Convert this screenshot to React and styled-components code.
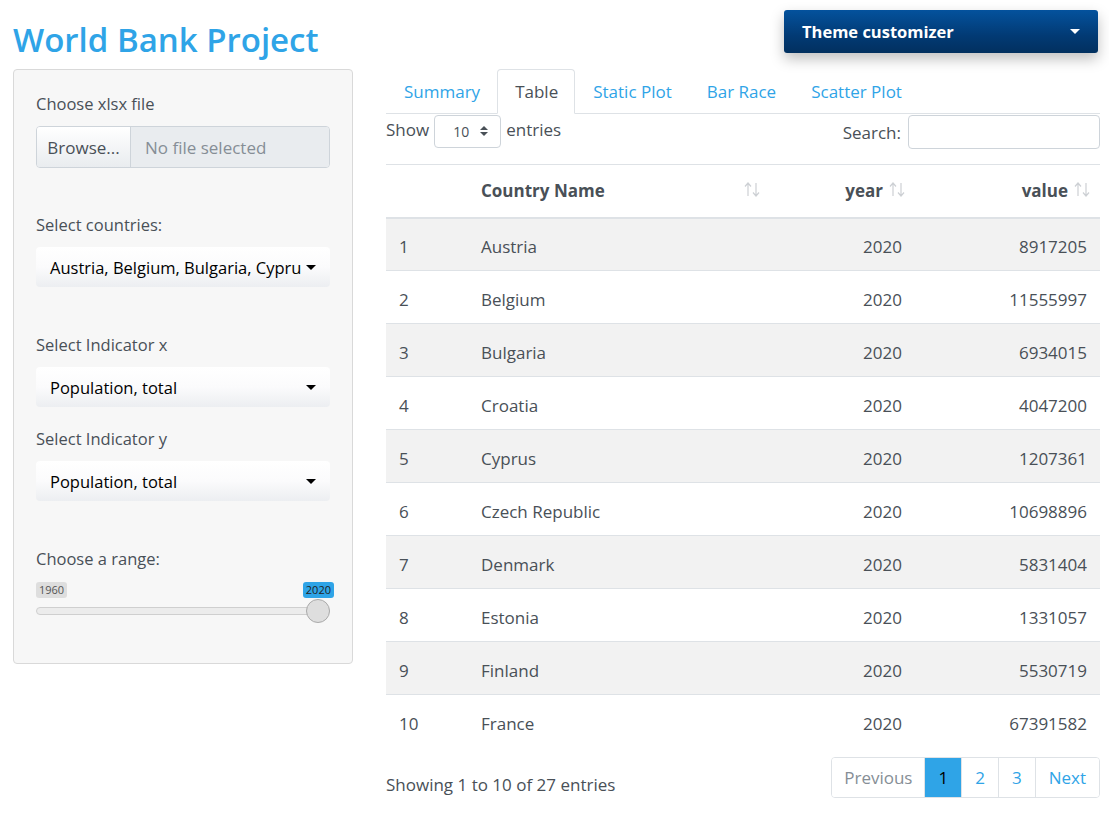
import React from "react";
import styled, { createGlobalStyle } from "styled-components";

const GlobalStyle = createGlobalStyle`
  html, body {
    margin: 0;
    padding: 0;
    background: #ffffff;
  }
  body {
    font-family: "Open Sans", "Noto Sans", sans-serif;
    font-size: 17px;
    color: #495057;
  }
  * {
    box-sizing: border-box;
  }
`;

const Page = styled.div`
  display: grid;
  grid-template-columns: 340px 714px;
  column-gap: 33px;
  padding: 0 9px 0 13px;
  position: relative;
`;

const Title = styled.h2`
  grid-column: 1 / 2;
  margin: 18px 0 8px;
  font-size: 33px;
  font-weight: 600;
  line-height: 43px;
  color: #2fa4e7;
  white-space: nowrap;
`;

const ThemeButton = styled.div`
  position: absolute;
  top: 10px;
  left: 784px;
  width: 314px;
  height: 43px;
  padding: 0 18px;
  display: flex;
  align-items: center;
  justify-content: space-between;
  background: linear-gradient(180deg, #04529d 0%, #023a74 60%, #02305f 100%);
  color: #ffffff;
  font-weight: 700;
  font-size: 16.5px;
  border-radius: 3px;
  box-shadow: 0 6px 14px rgba(0, 0, 0, 0.25);
`;

const Caret = styled.span`
  flex: none;
  width: 0;
  height: 0;
  border-left: ${(p) => p.size || 5}px solid transparent;
  border-right: ${(p) => p.size || 5}px solid transparent;
  border-top: ${(p) => p.size || 5}px solid ${(p) => p.color || "#000"};
`;

const Sidebar = styled.div`
  grid-column: 1 / 2;
  grid-row: 2;
  align-self: start;
  height: 595px;
  padding: 22px 22px 0;
  background: #f7f7f7;
  border: 1px solid #d9d9d9;
  border-radius: 4px;
`;

const Main = styled.div`
  grid-column: 2 / 3;
  grid-row: 2;
`;

const Label = styled.div`
  font-size: 16.5px;
  line-height: 24px;
  color: #495057;
  margin-top: ${(p) => p.top || 0}px;
`;

const FileGroup = styled.div`
  display: flex;
  height: 42px;
  margin-top: 10px;
  border: 1px solid #ced4da;
  border-radius: 4px;
  overflow: hidden;
`;

const BrowseButton = styled.div`
  width: 94px;
  display: flex;
  align-items: center;
  justify-content: center;
  background: linear-gradient(180deg, #ffffff 0%, #e9ecef 100%);
  border-right: 1px solid #ced4da;
  color: #495057;
`;

const FileName = styled.div`
  flex: 1;
  display: flex;
  align-items: center;
  padding-left: 14px;
  background: #e9ecef;
  color: #868e96;
`;

const SelectBox = styled.div`
  height: 40px;
  margin-top: ${(p) => p.top || 10}px;
  padding: 0 14px;
  display: flex;
  align-items: center;
  justify-content: space-between;
  gap: 2px;
  background: linear-gradient(180deg, #ffffff 0%, #fbfbfc 50%, #eceef1 100%);
  border-radius: 4px;
  color: #000000;
  font-size: 16.5px;
  white-space: nowrap;
`;

const SliderWrap = styled.div`
  position: relative;
  height: 48px;
  margin-top: 8px;
`;

const SliderLabel = styled.span`
  position: absolute;
  top: 3px;
  font-size: 11px;
  line-height: 16px;
  padding: 0 3px;
  border-radius: 3px;
  color: ${(p) => (p.active ? "#222" : "#555")};
  background: ${(p) => (p.active ? "#2fa4e7" : "#dedede")};
`;

const Track = styled.div`
  position: absolute;
  left: 0;
  right: 0;
  top: 28px;
  height: 8px;
  border: 1px solid #cfcfcf;
  border-radius: 4px;
  background: #ececec;
`;

const Knob = styled.div`
  position: absolute;
  top: 20px;
  right: 0;
  width: 24px;
  height: 24px;
  border-radius: 50%;
  border: 1px solid #aaaaaa;
  background: #dedede;
`;

const Tabs = styled.div`
  display: flex;
  height: 45px;
  border-bottom: 1px solid #dee2e6;
`;

const Tab = styled.div`
  display: flex;
  align-items: center;
  padding: 0 16px 0 17px;
  margin-bottom: -1px;
  color: ${(p) => (p.active ? "#495057" : "#2fa4e7")};
  background: ${(p) => (p.active ? "#ffffff" : "transparent")};
  border: 1px solid ${(p) => (p.active ? "#dee2e6" : "transparent")};
  border-bottom-color: ${(p) => (p.active ? "#ffffff" : "transparent")};
  border-radius: 4px 4px 0 0;
`;

const Controls = styled.div`
  display: flex;
  justify-content: space-between;
  align-items: flex-start;
  height: 50px;
`;

const ShowGroup = styled.div`
  display: flex;
  align-items: center;
  gap: 5px;
  height: 30px;
`;

const LengthSelect = styled.div`
  width: 67px;
  height: 33px;
  margin-top: 4px;
  padding: 0 12px 0 18px;
  display: flex;
  align-items: center;
  justify-content: space-between;
  border: 1px solid #ced4da;
  border-radius: 4px;
  font-size: 14px;
  color: #495057;
`;

const Spin = styled.span`
  display: flex;
  flex-direction: column;
  gap: 2px;
`;

const SearchGroup = styled.div`
  display: flex;
  align-items: center;
  gap: 7px;
  height: 34px;
  margin-top: 1px;
`;

const SearchInput = styled.div`
  width: 192px;
  height: 34px;
  border: 1px solid #ced4da;
  border-radius: 4px;
`;

const Table = styled.table`
  width: 100%;
  border-collapse: collapse;
  table-layout: fixed;
  border-top: 1px solid #dee2e6;
`;

const Th = styled.th`
  position: relative;
  height: 53px;
  padding: 0 ${(p) => (p.sort ? 32 : 13)}px 0 13px;
  text-align: ${(p) => p.align || "left"};
  font-weight: 700;
  color: #495057;
  border-bottom: 2px solid #dee2e6;
`;

const SortIcon = styled.svg`
  position: absolute;
  right: 10px;
  top: 17px;
`;

const Tr = styled.tr`
  background: ${(p) => (p.striped ? "#f2f2f2" : "#ffffff")};
`;

const Td = styled.td`
  height: 53px;
  padding: 4px 13px 0;
  text-align: ${(p) => p.align || "left"};
  border-top: 1px solid #dee2e6;
  color: #495057;
`;

const Footer = styled.div`
  display: flex;
  justify-content: space-between;
  align-items: center;
  margin-top: 9px;
`;

const Info = styled.div`
  padding-top: 14px;
`;

const Pagination = styled.div`
  display: flex;
  height: 41px;
  border: 1px solid #dee2e6;
  border-radius: 4px;
  overflow: hidden;
`;

const PageItem = styled.div`
  display: flex;
  align-items: center;
  padding: 0 ${(p) => p.pad || 13}px;
  border-left: ${(p) => (p.first ? "none" : "1px solid #dee2e6")};
  background: ${(p) => (p.active ? "#2fa4e7" : "#ffffff")};
  color: ${(p) => (p.active ? "#000000" : p.disabled ? "#868e96" : "#2fa4e7")};
`;

const rows = [
  ["Austria", 8917205],
  ["Belgium", 11555997],
  ["Bulgaria", 6934015],
  ["Croatia", 4047200],
  ["Cyprus", 1207361],
  ["Czech Republic", 10698896],
  ["Denmark", 5831404],
  ["Estonia", 1331057],
  ["Finland", 5530719],
  ["France", 67391582],
];

const Sort = () => (
  <SortIcon width="16" height="15" viewBox="0 0 16 15" fill="none" stroke="#cdd0d4" strokeWidth="1.2">
    <path d="M4 14V1M1 4.5L4 1l3 3.5" />
    <path d="M12 1v13M9 10.5l3 3.5 3-3.5" />
  </SortIcon>
);

export default function App() {
  return (
    <>
      <GlobalStyle />
      <Page>
        <Title>World Bank Project</Title>
        <ThemeButton>
          <span>Theme customizer</span>
          <Caret color="#ffffff" size={5} />
        </ThemeButton>

        <Sidebar>
          <Label>Choose xlsx file</Label>
          <FileGroup>
            <BrowseButton>Browse...</BrowseButton>
            <FileName>No file selected</FileName>
          </FileGroup>

          <Label top={45}>Select countries:</Label>
          <SelectBox>
            <span>Austria, Belgium, Bulgaria, Cypru</span>
            <Caret size={5} />
          </SelectBox>

          <Label top={46}>Select Indicator x</Label>
          <SelectBox>
            <span>Population, total</span>
            <Caret size={5} />
          </SelectBox>

          <Label top={20}>Select Indicator y</Label>
          <SelectBox>
            <span>Population, total</span>
            <Caret size={5} />
          </SelectBox>

          <Label top={46}>Choose a range:</Label>
          <SliderWrap>
            <SliderLabel style={{ left: 0 }}>1960</SliderLabel>
            <SliderLabel active style={{ right: -4 }}>2020</SliderLabel>
            <Track />
            <Knob />
          </SliderWrap>
        </Sidebar>

        <Main>
          <Tabs>
            <Tab>Summary</Tab>
            <Tab active>Table</Tab>
            <Tab>Static Plot</Tab>
            <Tab>Bar Race</Tab>
            <Tab>Scatter Plot</Tab>
          </Tabs>

          <Controls>
            <ShowGroup>
              <span>Show</span>
              <LengthSelect>
                <span>10</span>
                <Spin>
                  <Caret size={4} color="#495057" style={{ transform: "rotate(180deg)" }} />
                  <Caret size={4} color="#495057" />
                </Spin>
              </LengthSelect>
              <span>entries</span>
            </ShowGroup>
            <SearchGroup>
              <span>Search:</span>
              <SearchInput />
            </SearchGroup>
          </Controls>

          <Table>
            <colgroup>
              <col style={{ width: 82 }} />
              <col style={{ width: 302 }} />
              <col style={{ width: 145 }} />
              <col style={{ width: 185 }} />
            </colgroup>
            <thead>
              <tr>
                <Th></Th>
                <Th sort>
                  Country Name
                  <Sort />
                </Th>
                <Th sort align="right">
                  year
                  <Sort />
                </Th>
                <Th sort align="right">
                  value
                  <Sort />
                </Th>
              </tr>
            </thead>
            <tbody>
              {rows.map(([name, value], i) => (
                <Tr key={name} striped={i % 2 === 0}>
                  <Td>{i + 1}</Td>
                  <Td>{name}</Td>
                  <Td align="right">2020</Td>
                  <Td align="right">{value}</Td>
                </Tr>
              ))}
            </tbody>
          </Table>

          <Footer>
            <Info>Showing 1 to 10 of 27 entries</Info>
            <Pagination>
              <PageItem first disabled pad={12}>Previous</PageItem>
              <PageItem active pad={13}>1</PageItem>
              <PageItem pad={13}>2</PageItem>
              <PageItem pad={13}>3</PageItem>
              <PageItem pad={13}>Next</PageItem>
            </Pagination>
          </Footer>
        </Main>
      </Page>
    </>
  );
}
